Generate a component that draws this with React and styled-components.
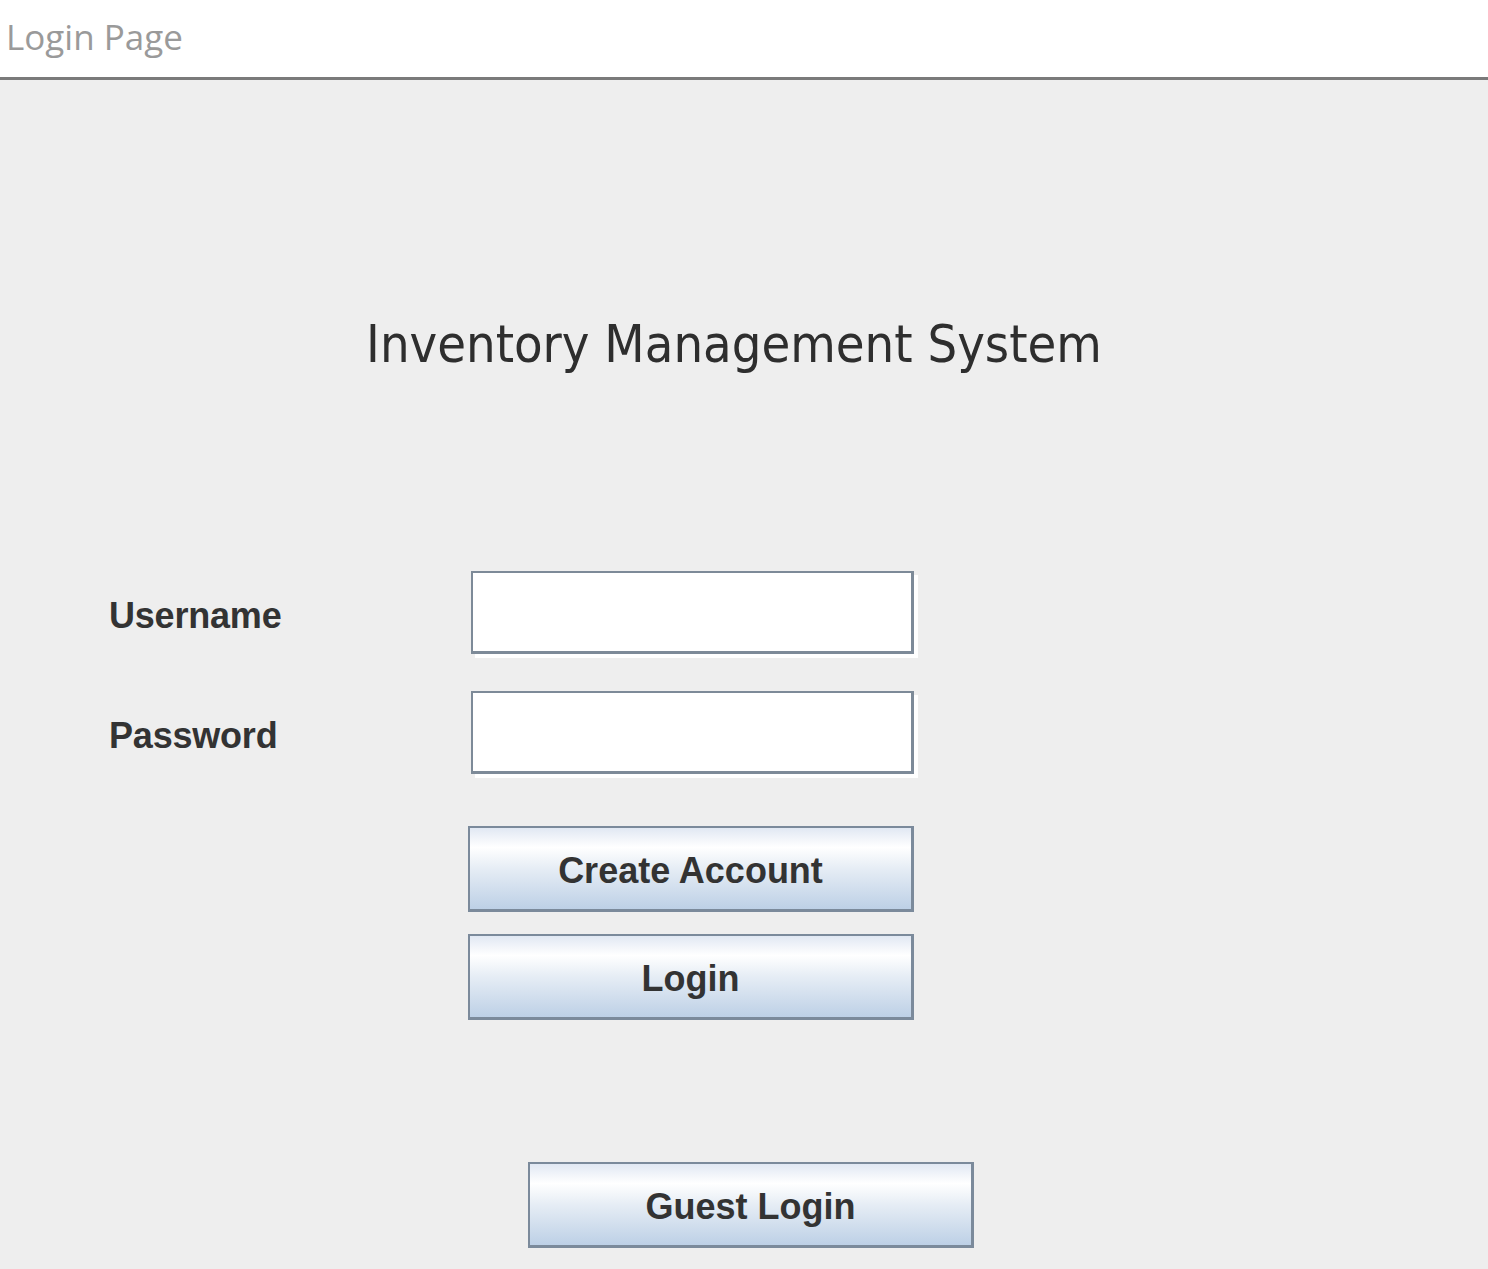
import styled, { createGlobalStyle } from 'styled-components';

const GlobalStyle = createGlobalStyle`
  html, body {
    margin: 0;
    padding: 0;
    background: #eeeeee;
  }
`

const Page = styled.div`
  min-height: 1269px;
  display: flex;
  flex-direction: column;
  background: #eeeeee;
`

const Header = styled.header`
  height: 77px;
  background: #ffffff;
  border-bottom: 3px solid #7a7a7a;
  display: flex;
  align-items: center;
  padding-left: 6px;
`

const HeaderTitle = styled.span`
  font-family: "Open Sans", "Noto Sans", sans-serif;
  font-size: 35px;
  color: #9a9a9a;
  margin-top: -4px;
`

const Main = styled.main`
  display: flex;
  flex-direction: column;
  padding-top: 234px;
`

const Title = styled.h1`
  margin: 0 0 197px;
  font-family: "DejaVu Sans", sans-serif;
  font-stretch: condensed;
  font-weight: normal;
  font-size: 52px;
  line-height: 60px;
  color: #2e2e2e;
  text-align: center;
  padding-right: 20px;
`

const Form = styled.div`
  display: grid;
  grid-template-columns: 362px 447px;
  grid-auto-rows: 83px;
  row-gap: 37px;
  margin-left: 109px;
`

const Label = styled.label`
  align-self: center;
  font-family: "Liberation Sans", Arial, sans-serif;
  font-weight: bold;
  font-size: 36px;
  letter-spacing: -0.2px;
  color: #333333;
  padding-top: 6px;
`

const Field = styled.input`
  box-sizing: border-box;
  width: 443px;
  height: 83px;
  margin: 0;
  background: #ffffff;
  border: 2px solid #7d8a98;
  border-right-width: 3px;
  border-bottom-width: 3px;
  box-shadow: 4px 4px 0 #ffffff;
  outline: none;
  font-size: 28px;
  padding: 0 8px;
`

const Actions = styled.div`
  display: flex;
  flex-direction: column;
  gap: 22px;
  margin-top: 52px;
  padding-left: ${({ offset }) => offset}px;
`

const Button = styled.button`
  box-sizing: border-box;
  width: 446px;
  height: 86px;
  margin: 0;
  padding: 5px 0 0;
  border: 2px solid #7b8a9b;
  border-right-width: 3px;
  border-bottom-width: 3px;
  background: linear-gradient(
    to bottom,
    #e1e8f3 0%,
    #ffffff 24%,
    #e6edf5 50%,
    #bdd0e6 100%
  );
  font-family: "Liberation Sans", Arial, sans-serif;
  font-weight: bold;
  font-size: 36px;
  color: #333333;
  cursor: pointer;
`

const GuestRow = styled.div`
  margin-top: 142px;
  padding-left: 528px;
`

export default function App() {
  return (
    <>
      <GlobalStyle />
      <Page>
        <Header>
          <HeaderTitle>Login Page</HeaderTitle>
        </Header>
        <Main>
          <Title>Inventory Management System</Title>
          <Form>
            <Label htmlFor="username">Username</Label>
            <Field id="username" type="text" />
            <Label htmlFor="password">Password</Label>
            <Field id="password" type="password" />
          </Form>
          <Actions offset={468}>
            <Button>Create Account</Button>
            <Button>Login</Button>
          </Actions>
          <GuestRow>
            <Button>Guest Login</Button>
          </GuestRow>
        </Main>
      </Page>
    </>
  );
}
